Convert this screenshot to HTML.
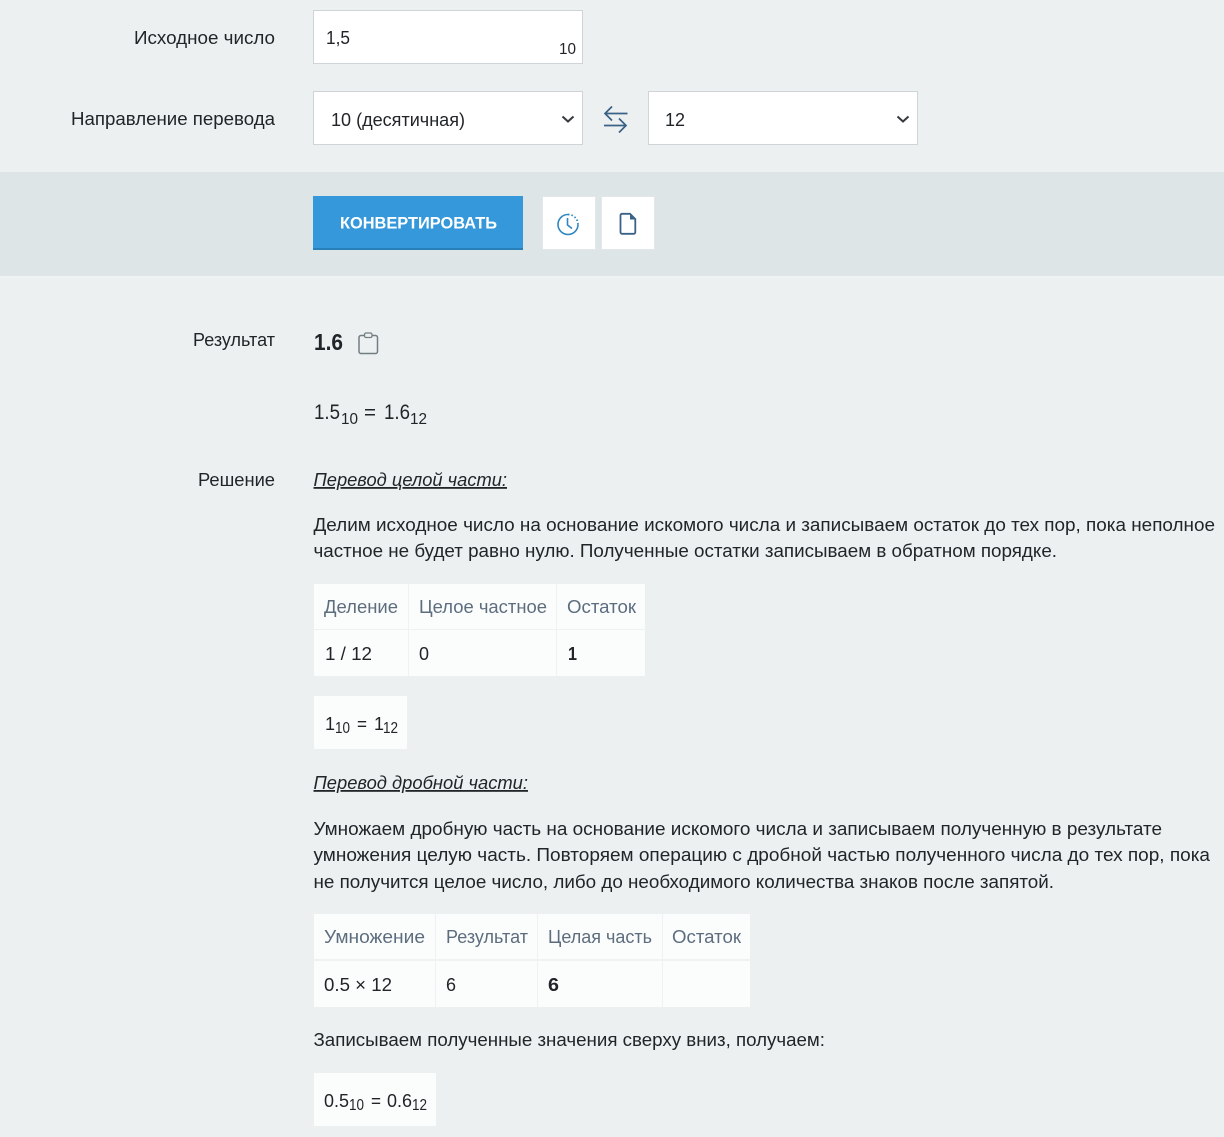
<!DOCTYPE html>
<html lang="ru"><head><meta charset="utf-8"><title>Конвертер</title>
<style>
html,body{margin:0;padding:0;background:#ecf0f1;width:1224px;height:1137px;overflow:hidden}
svg{display:block}
text{font-family:"Liberation Sans",sans-serif;font-size:18px;fill:#212529}
.h{fill:#5d6d7e}
.b{font-weight:bold}
.i{font-style:italic;text-decoration:underline}
.s{font-size:15px}
.c{fill:#fbfdfd}
</style></head><body>
<svg width="1224" height="1137" viewBox="0 0 1224 1137" xmlns="http://www.w3.org/2000/svg">
<rect width="1224" height="1137" fill="#ecf0f1"/>
<text x="134" y="44" textLength="141" lengthAdjust="spacingAndGlyphs">Исходное число</text>
<rect x="313.5" y="10.5" width="269" height="53" fill="#fff" stroke="#ced4d7"/>
<text x="326" y="44" textLength="24" lengthAdjust="spacingAndGlyphs">1,5</text>
<text x="559" y="54" style="font-size:16px" textLength="17" lengthAdjust="spacingAndGlyphs">10</text>
<text x="71" y="125" textLength="204" lengthAdjust="spacingAndGlyphs">Направление перевода</text>
<rect x="313.5" y="91.5" width="269" height="53" fill="#fff" stroke="#ced4d7"/>
<text x="331" y="126" textLength="134" lengthAdjust="spacingAndGlyphs">10 (десятичная)</text>
<path d="M562.5 116.5l5.5 5 5.5-5" fill="none" stroke="#343a40" stroke-width="2"/>
<g fill="none" stroke="#3a6186" stroke-width="1.7">
<path d="M605 113.5H627.500M612 106.500l-7 7 7 7"/>
<path d="M604 125.500H626.500M619 118.500l7 7-7 7"/>
</g>
<rect x="648.5" y="91.5" width="269" height="53" fill="#fff" stroke="#ced4d7"/>
<text x="665" y="126" textLength="20" lengthAdjust="spacingAndGlyphs">12</text>
<path d="M897.500 116.500l5.500 5 5.500-5" fill="none" stroke="#343a40" stroke-width="2"/>

<rect y="172" width="1224" height="104" fill="#dee5e7"/>
<rect y="276" width="1224" height="2" fill="#f0f3f4"/>
<rect x="313" y="196" width="210" height="54" fill="#3498db"/>
<rect x="313" y="248" width="210" height="2" fill="#2980b9"/>
<text x="340" y="228.500" class="b" style="font-size:17px;fill:#fff" textLength="157" lengthAdjust="spacingAndGlyphs">КОНВЕРТИРОВАТЬ</text>
<rect x="542.500" y="196.500" width="53" height="53" fill="#fff" stroke="#e3e7e9"/>
<rect x="601.500" y="196.500" width="53" height="53" fill="#fff" stroke="#e3e7e9"/>
<g fill="none" stroke="#2f86c1">
<path d="M568 214.500a10 10 0 1 0 10 10" stroke-width="1.600"/>
<path d="M568 214.500a10 10 0 0 1 10 10" stroke-width="1.700" stroke-dasharray="1.500 2"/>
<path d="M567.500 218v7l4.500 3.500" stroke-width="1.600"/>
</g>
<path d="M622 213.800h8l5.300 5.300v13.200a1.500 1.500 0 0 1-1.500 1.500h-11.800a1.500 1.500 0 0 1-1.500-1.500v-17a1.500 1.500 0 0 1 1.500-1.500z" fill="none" stroke="#3a6186" stroke-width="1.800"/>
<path d="M630 214l5.500 5.500h-5.500z" fill="#3a6186"/>

<text x="193" y="346" textLength="82" lengthAdjust="spacingAndGlyphs">Результат</text>
<text x="314" y="350" class="b" style="font-size:23px" textLength="29" lengthAdjust="spacingAndGlyphs">1.6</text>
<path d="M364 335.500h-3a2 2 0 0 0-2 2v14a2 2 0 0 0 2 2h14.500a2 2 0 0 0 2-2v-14a2 2 0 0 0-2-2h-3" fill="none" stroke="#737e82" stroke-width="1.500"/>
<rect x="364.500" y="333" width="7.500" height="4.500" rx="1.500" fill="none" stroke="#737e82" stroke-width="1.300"/>

<text x="314" y="419" style="font-size:21px" textLength="26" lengthAdjust="spacingAndGlyphs">1.5</text>
<text x="341" y="424" style="font-size:16px" textLength="17" lengthAdjust="spacingAndGlyphs">10</text>
<text x="364" y="419" style="font-size:20px" textLength="12" lengthAdjust="spacingAndGlyphs">=</text>
<text x="384" y="419" style="font-size:21px" textLength="26" lengthAdjust="spacingAndGlyphs">1.6</text>
<text x="410" y="424" style="font-size:16px" textLength="17" lengthAdjust="spacingAndGlyphs">12</text>

<text x="198" y="486" textLength="77" lengthAdjust="spacingAndGlyphs">Решение</text>
<text x="313.500" y="486" class="i" textLength="193.500" lengthAdjust="spacingAndGlyphs">Перевод целой части:</text>
<text x="313.500" y="531" textLength="901.500" lengthAdjust="spacingAndGlyphs">Делим исходное число на основание искомого числа и записываем остаток до тех пор, пока неполное</text>
<text x="313.500" y="557" textLength="743.500" lengthAdjust="spacingAndGlyphs">частное не будет равно нулю. Полученные остатки записываем в обратном порядке.</text>

<rect x="314" y="584" width="331" height="92" class="c"/>
<rect x="408" y="584" width="1" height="92" fill="#eff2f3"/>
<rect x="556" y="584" width="1" height="92" fill="#eff2f3"/>
<rect x="314" y="629" width="331" height="1" fill="#eff2f3"/>
<text x="324" y="613" class="h" textLength="74" lengthAdjust="spacingAndGlyphs">Деление</text>
<text x="419" y="613" class="h" textLength="128" lengthAdjust="spacingAndGlyphs">Целое частное</text>
<text x="567" y="613" class="h" textLength="69" lengthAdjust="spacingAndGlyphs">Остаток</text>
<text x="325" y="660" textLength="47" lengthAdjust="spacingAndGlyphs">1 / 12</text>
<text x="419" y="660" textLength="10" lengthAdjust="spacingAndGlyphs">0</text>
<text x="568" y="660" class="b" textLength="9" lengthAdjust="spacingAndGlyphs">1</text>

<rect x="314" y="696" width="93" height="53" class="c"/>
<text x="325" y="730" textLength="8">1</text>
<text x="335" y="733" class="s" style="font-size:16px" textLength="15" lengthAdjust="spacingAndGlyphs">10</text>
<text x="357" y="730" textLength="10" lengthAdjust="spacingAndGlyphs">=</text>
<text x="374" y="730" textLength="8">1</text>
<text x="383" y="733" class="s" style="font-size:16px" textLength="15" lengthAdjust="spacingAndGlyphs">12</text>

<text x="313.500" y="789" class="i" textLength="214.500" lengthAdjust="spacingAndGlyphs">Перевод дробной части:</text>
<text x="313.500" y="835" textLength="848.500" lengthAdjust="spacingAndGlyphs">Умножаем дробную часть на основание искомого числа и записываем полученную в результате</text>
<text x="313.500" y="861" textLength="896.500" lengthAdjust="spacingAndGlyphs">умножения целую часть. Повторяем операцию с дробной частью полученного числа до тех пор, пока</text>
<text x="313.500" y="888" textLength="740.500" lengthAdjust="spacingAndGlyphs">не получится целое число, либо до необходимого количества знаков после запятой.</text>

<rect x="314" y="914" width="436" height="93" class="c"/>
<rect x="435" y="914" width="1" height="93" fill="#eff2f3"/>
<rect x="537" y="914" width="1" height="93" fill="#eff2f3"/>
<rect x="662" y="914" width="1" height="93" fill="#eff2f3"/>
<rect x="314" y="959" width="436" height="2" fill="#eff2f3"/>
<text x="324" y="943" class="h" textLength="101" lengthAdjust="spacingAndGlyphs">Умножение</text>
<text x="446" y="943" class="h" textLength="82" lengthAdjust="spacingAndGlyphs">Результат</text>
<text x="548" y="943" class="h" textLength="104" lengthAdjust="spacingAndGlyphs">Целая часть</text>
<text x="672" y="943" class="h" textLength="69" lengthAdjust="spacingAndGlyphs">Остаток</text>
<text x="324" y="991" textLength="68" lengthAdjust="spacingAndGlyphs">0.5 × 12</text>
<text x="446" y="991" textLength="10" lengthAdjust="spacingAndGlyphs">6</text>
<text x="548" y="991" class="b" textLength="11" lengthAdjust="spacingAndGlyphs">6</text>

<text x="313.500" y="1046" textLength="511.500" lengthAdjust="spacingAndGlyphs">Записываем полученные значения сверху вниз, получаем:</text>

<rect x="314" y="1073" width="122" height="53" class="c"/>
<text x="324" y="1107" textLength="25" lengthAdjust="spacingAndGlyphs">0.5</text>
<text x="349" y="1110" class="s" style="font-size:16px" textLength="15" lengthAdjust="spacingAndGlyphs">10</text>
<text x="371" y="1107" textLength="10" lengthAdjust="spacingAndGlyphs">=</text>
<text x="387" y="1107" textLength="25" lengthAdjust="spacingAndGlyphs">0.6</text>
<text x="412" y="1110" class="s" style="font-size:16px" textLength="15" lengthAdjust="spacingAndGlyphs">12</text>
</svg>
</body></html>
